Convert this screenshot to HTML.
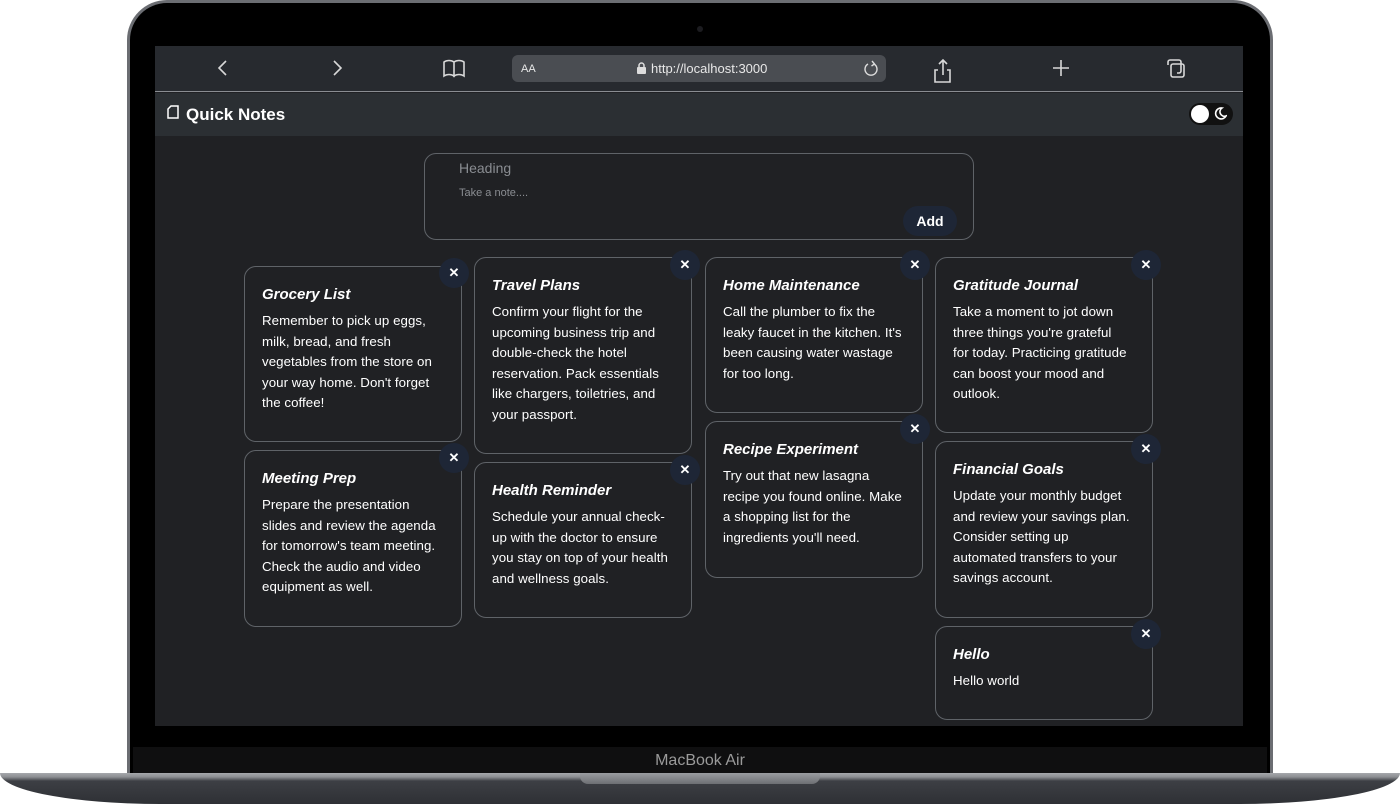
<!DOCTYPE html>
<html><head><style>
*{margin:0;padding:0;box-sizing:border-box}
body{width:1400px;height:804px;background:#fff;position:relative;overflow:hidden;font-family:"Liberation Sans",sans-serif}
.abs{position:absolute}
#lid{left:127px;top:0;width:1146px;height:780px;background:#000;border-radius:40px 40px 0 0;border:3px solid #6b6d72;border-bottom:none}
#screen{left:155px;top:46px;width:1088px;height:680px;background:#202124;overflow:hidden}
#bar{left:0;top:0;width:1088px;height:46px;background:#272a2f;border-bottom:1px solid #8a8d92}
#url{left:357px;top:9px;width:374px;height:27px;background:#4a4d52;border-radius:6px;color:#e8e8e8;font-size:13px}
#hdr{left:0;top:47px;width:1088px;height:43px;background:#2b2f33}
.card{position:absolute;width:218px;border:1px solid #5f6368;border-radius:12px;padding:18px 19px 0 17px;color:#fff}
.card h3{font-size:15px;font-style:italic;font-weight:bold;line-height:20px;margin-bottom:6px}
.card p{font-size:13.3px;line-height:20.5px;letter-spacing:0.05px}
.x{position:absolute;width:30px;height:30px;border-radius:50%;background:#1e2636;color:#fff;font-size:13px;font-weight:bold;text-align:center;line-height:30px}
#chin{left:133px;top:747px;width:1134px;height:27px;background:#0f0f10;color:#9a9a9a;text-align:center;font-size:16px;line-height:27px}
#base{left:0;top:773px;width:1400px;height:31px;background:linear-gradient(#a6a8ac 0,#8c8e92 4px,#3d3f44 8px,#2e3035 100%);border-radius:0 0 160px 160px/0 0 31px 31px}
#notch{left:580px;top:773px;width:240px;height:11px;background:linear-gradient(#9a9ca0,#6d6f73);border-radius:0 0 8px 8px}
</style></head><body>
<div id="lid" class="abs"></div>
<div class="abs" style="left:697px;top:26px;width:6px;height:6px;border-radius:50%;background:#1c1c20"></div>
<div id="screen" class="abs">
 <div id="bar" class="abs">
  <svg class="abs" style="left:0;top:0" width="1088" height="46" fill="none" stroke="#d8d8d8" stroke-width="1.6">
   <path d="M71 15l-7 7 7 7"/><path d="M179 15l7 7-7 7"/>
   <path d="M289 16c3-2 7-2 10 0v14c-3-2-7-2-10 0zM299 16c3-2 7-2 10 0v14c-3-2-7-2-10 0z"/>
   <path d="M783 24h-3v12h15v-12h-3M788 29v-15M784 18l4-4 4 4"/>
   <path d="M898 22h16M906 14v16"/>
   <path d="M1013 19v-3a2 2 0 0 1 2-2h9a2 2 0 0 1 2 2v9a2 2 0 0 1-2 2h-2"/>
   <rect x="1016" y="18" width="13" height="13" rx="2"/>
  </svg>
  <div id="url" class="abs">
   <span class="abs" style="left:9px;top:8px;font-size:11px">AA</span>
   <svg class="abs" style="left:124px;top:7px" width="11" height="13"><rect x="1" y="5" width="9" height="7" rx="1" fill="#ddd"/><path d="M3 5V3.5a2.5 2.5 0 0 1 5 0V5" stroke="#ddd" fill="none" stroke-width="1.5"/></svg>
   <span class="abs" style="left:139px;top:6px">http://localhost:3000</span>
   <svg class="abs" style="left:350px;top:5px" width="18" height="18" fill="none" stroke="#ddd" stroke-width="1.4"><path d="M12 4a6 6 0 1 1-6 0M10 1l2.5 3-3 2"/></svg>
  </div>
 </div>
 <div id="hdr" class="abs">
  <svg class="abs" style="left:12px;top:12px" width="12" height="14" fill="none" stroke="#fff" stroke-width="1.5"><path d="M4 1h7v12H1V4z"/></svg>
  <span class="abs" style="left:31px;top:12px;color:#fff;font-weight:bold;font-size:17px">Quick Notes</span>
  <div class="abs" style="left:1034px;top:10px;width:44px;height:22px;border-radius:11px;background:#111"></div>
  <div class="abs" style="left:1036px;top:12px;width:18px;height:18px;border-radius:50%;background:#fff"></div>
  <svg class="abs" style="left:1059px;top:14px" width="13" height="13"><path d="M8 1a5.5 5.5 0 1 0 4 8 4.5 4.5 0 0 1-4-8z" fill="none" stroke="#fff" stroke-width="1.6"/></svg>
 </div>
 <div class="abs" style="left:269px;top:107px;width:550px;height:87px;border:1px solid #5f6368;border-radius:12px">
  <span class="abs" style="left:34px;top:6px;color:#8a8d92;font-size:14px">Heading</span>
  <span class="abs" style="left:34px;top:33px;color:#8a8d92;font-size:11px">Take a note....</span>
  <div class="abs" style="left:478px;top:52px;width:54px;height:30px;border-radius:15px;background:#1e2636;color:#fff;font-weight:bold;font-size:14px;text-align:center;line-height:30px">Add</div>
 </div>
</div>
<div class="abs" style="left:155px;top:46px;width:1088px;height:680px">
 <div class="card" style="left:89px;top:220px;height:176px"><h3>Grocery List</h3><p>Remember to pick up eggs, milk, bread, and fresh vegetables from the store on your way home. Don't forget the coffee!</p></div>
 <div class="card" style="left:89px;top:404px;height:177px"><h3>Meeting Prep</h3><p>Prepare the presentation slides and review the agenda for tomorrow's team meeting. Check the audio and video equipment as well.</p></div>
 <div class="card" style="left:319px;top:211px;height:197px"><h3>Travel Plans</h3><p>Confirm your flight for the upcoming business trip and double-check the hotel reservation. Pack essentials like chargers, toiletries, and your passport.</p></div>
 <div class="card" style="left:319px;top:416px;height:156px"><h3>Health Reminder</h3><p>Schedule your annual check-up with the doctor to ensure you stay on top of your health and wellness goals.</p></div>
 <div class="card" style="left:550px;top:211px;height:156px"><h3>Home Maintenance</h3><p>Call the plumber to fix the leaky faucet in the kitchen. It's been causing water wastage for too long.</p></div>
 <div class="card" style="left:550px;top:375px;height:157px"><h3>Recipe Experiment</h3><p>Try out that new lasagna recipe you found online. Make a shopping list for the ingredients you'll need.</p></div>
 <div class="card" style="left:780px;top:211px;height:176px"><h3>Gratitude Journal</h3><p>Take a moment to jot down three things you're grateful<br>for today. Practicing gratitude can boost your mood and outlook.</p></div>
 <div class="card" style="left:780px;top:395px;height:177px"><h3>Financial Goals</h3><p>Update your monthly budget and review your savings plan. Consider setting up<br>automated transfers to your savings account.</p></div>
 <div class="card" style="left:780px;top:580px;height:94px"><h3>Hello</h3><p>Hello world</p></div>
 <div class="x" style="left:284px;top:212px">✕</div>
 <div class="x" style="left:284px;top:397px">✕</div>
 <div class="x" style="left:515px;top:204px">✕</div>
 <div class="x" style="left:515px;top:409px">✕</div>
 <div class="x" style="left:745px;top:204px">✕</div>
 <div class="x" style="left:745px;top:368px">✕</div>
 <div class="x" style="left:976px;top:204px">✕</div>
 <div class="x" style="left:976px;top:388px">✕</div>
 <div class="x" style="left:976px;top:573px">✕</div>
</div>
<div id="chin" class="abs">MacBook Air</div>
<div id="base" class="abs"></div>
<div id="notch" class="abs"></div>
</body></html>
